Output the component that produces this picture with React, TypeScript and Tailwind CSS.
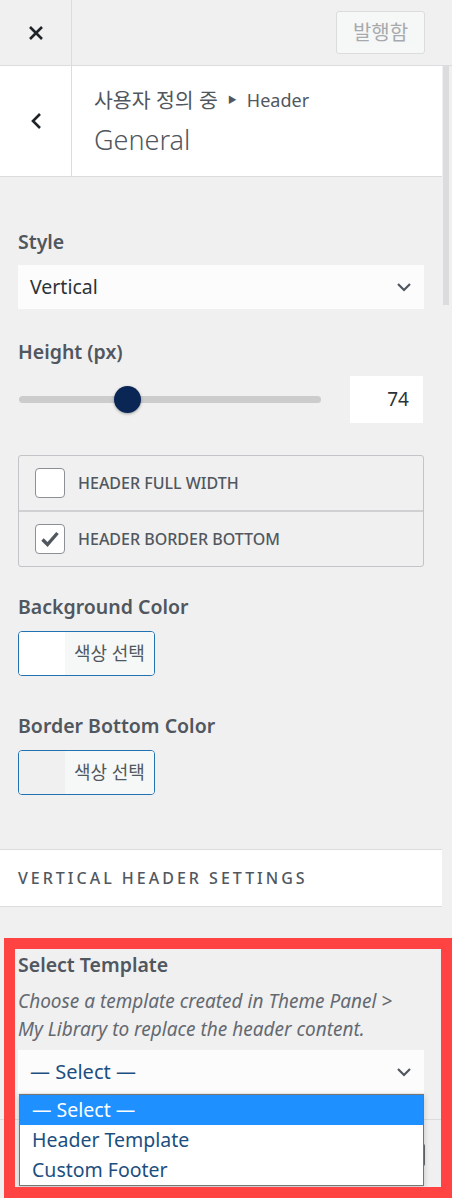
import React from "react"

function Chevron({ className = "" }: { className?: string }) {
  return (
    <svg width="16" height="10" viewBox="0 0 16 10" className={className} fill="none">
      <polyline points="2,2 8,8 14,2" stroke="#50575e" strokeWidth="2.2" />
    </svg>
  )
}

function Label({ children, className = "" }: { children: React.ReactNode; className?: string }) {
  return <div className={`text-[19.5px] font-semibold leading-[24px] text-[#50575e] ${className}`}>{children}</div>
}

function ColorButton({ swatch }: { swatch: string }) {
  return (
    <div className="mt-[12px] flex h-[45px] w-[137px] overflow-hidden rounded-[4px] border border-[#2271b1]">
      <div className={`w-[46px] ${swatch}`} />
      <div className="flex flex-1 items-center bg-[#f6f7f7] pl-[9px] text-[18px] text-[#50575e]">색상 선택</div>
    </div>
  )
}

function CheckRow({ label, checked }: { label: string; checked?: boolean }) {
  return (
    <div className="flex h-[54px] items-center gap-[13px] pl-[16px]">
      <div className="flex h-[30px] w-[30px] items-center justify-center rounded-[4px] border border-[#8c8f94] bg-white">
        {checked && (
          <svg width="18" height="16" viewBox="0 0 18 16">
            <path d="M1.5 8.5 L6.5 13.5 L16.5 2" fill="none" stroke="#50575e" strokeWidth="3.4" />
          </svg>
        )}
      </div>
      <span className="text-[16px] font-medium uppercase text-[#50575e]">{label}</span>
    </div>
  )
}

export default function App() {
  return (
    <div className="relative h-[1198px] w-[452px] overflow-hidden bg-[#f0f0f1] font-['Noto_Sans','Noto_Sans_CJK_KR',sans-serif] text-[#50575e]">
      {/* top bar */}
      <div className="flex h-[66px] border-b border-[#dcdcde]">
        <div className="flex w-[72px] items-center justify-center border-r border-[#dcdcde]">
          <svg width="16" height="16" viewBox="0 0 16 16">
            <path d="M2 2 L14 14 M14 2 L2 14" stroke="#1d2327" strokeWidth="2.6" />
          </svg>
        </div>
        <div className="flex flex-1 items-center justify-end pr-[27px]">
          <div className="flex h-[43px] w-[89px] items-center justify-center rounded-[3px] border border-[#dcdcde] bg-[#f6f7f7] text-[20px] text-[#a7aaad]">
            발행함
          </div>
        </div>
      </div>

      <div className="flex">
        <div className="w-[442px]">
          {/* section header */}
          <div className="flex h-[111px] border-b border-[#dcdcde] bg-white">
            <div className="flex w-[72px] items-center justify-center border-r border-[#dcdcde]">
              <svg width="12" height="18" viewBox="0 0 12 18">
                <polyline points="10,2 3,9 10,16" fill="none" stroke="#1d2327" strokeWidth="2.6" />
              </svg>
            </div>
            <div className="pl-[22px] pt-[22px]">
              <div className="flex items-center text-[18px] leading-[24px] text-[#50575e]">
                <span className="text-[20.5px]">사용자 정의 중</span>
                <span className="mx-[10px] text-[9px]">▶</span>
                Header
              </div>
              <div className="mt-[10px] text-[27px] font-light leading-[36px] text-[#50575e]">General</div>
            </div>
          </div>

          {/* controls */}
          <div className="px-[18px] pt-[53px]">
            <Label>Style</Label>
            <div className="mt-[11px] flex h-[44px] items-center justify-between bg-[#fcfcfd] pl-[12px] pr-[12px] text-[19.5px] text-[#2c3338]">
              Vertical
              <Chevron />
            </div>

            <Label className="mt-[31px]">Height (px)</Label>
            <div className="mt-[12px] flex h-[47px] items-center">
              <div className="relative ml-[1px] h-[7px] w-[302px] rounded-full bg-[#cccccc]">
                <div className="absolute left-[95px] top-[-10px] h-[27px] w-[27px] rounded-full bg-[#0a2655] shadow-[0_1px_3px_rgba(0,0,0,0.35)]" />
              </div>
              <div className="ml-auto mr-[1px] h-[47px] w-[73px] bg-white pr-[14px] text-right text-[19px] leading-[47px] text-[#2c3338]">
                74
              </div>
            </div>

            <div className="mt-[32px] rounded-[3px] border border-[#c3c4c7]">
              <CheckRow label="Header Full Width" />
              <div className="border-t-2 border-[#d0d0d2]" />
              <CheckRow label="Header Border Bottom" checked />
            </div>

            <Label className="mt-[28px]">Background Color</Label>
            <ColorButton swatch="bg-white" />

            <Label className="mt-[38px]">Border Bottom Color</Label>
            <ColorButton swatch="bg-[#f0f0f0]" />

            <div className="-mx-[18px] mt-[54px] flex h-[58px] items-center border-y border-[#dcdcde] bg-white pl-[18px] text-[16px] font-medium uppercase tracking-[3px] text-[#50575e]">
              Vertical Header Settings
            </div>

            <Label className="mt-[46px]">Select Template</Label>
            <p className="mt-[10px] max-w-[400px] text-[19px] italic leading-[28px] text-[#646970]">
              Choose a template created in Theme Panel &gt; My Library to replace the header content.
            </p>
            <div className="relative mt-[7px]">
              <div className="flex h-[43px] items-center justify-between bg-[#fcfcfd] pl-[12px] pr-[12px] text-[20px] text-[#1b4f80]">
                — Select —
                <Chevron />
              </div>
              <div className="absolute left-[1px] right-0 top-[44px] z-10 border border-[#767676] bg-white text-[19.5px] shadow-[0_2px_6px_rgba(0,0,0,0.2)]">
                <div className="h-[30px] bg-[#1e90ff] pl-[12px] leading-[30px] text-white">— Select —</div>
                <div className="h-[30px] pl-[12px] leading-[30px] text-[#1b4f80]">Header Template</div>
                <div className="h-[30px] pl-[12px] leading-[30px] text-[#1b4f80]">Custom Footer</div>
              </div>
            </div>
            <div className="-mx-[18px] mt-[26px] border-t border-[#dcdcde] pr-[17px] pt-[23px]">
              <div className="ml-auto h-[24px] w-[100px] rounded-[3px] border border-[#646970]" />
            </div>
          </div>
        </div>

        {/* scrollbar */}
        <div className="w-[10px] pl-[1px]">
          <div className="h-[239px] w-[6px] bg-[#dcdcde]" />
        </div>
      </div>

      {/* annotation frame */}
      <div className="pointer-events-none absolute left-[4px] top-[938px] z-20 h-[260px] w-[448px] border-[11px] border-[#ff4242]" />
    </div>
  )
}
